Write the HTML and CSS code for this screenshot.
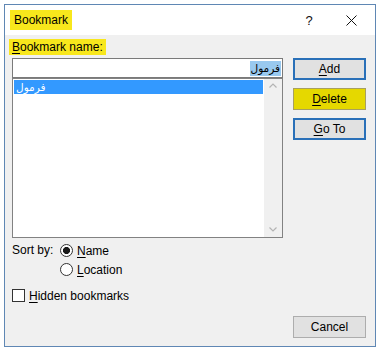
FILE: index.html
```html
<!DOCTYPE html>
<html>
<head>
<meta charset="utf-8">
<link rel="stylesheet" href="styles.css">
</head>
<body>
<div class="window">
  <div class="titlebar">
    <span class="title hl">Bookmark</span>
    <span class="tb-btn help">?</span>
    <span class="tb-btn close"><svg width="11" height="11" viewBox="0 0 11 11"><path d="M0.5 0.5 L10.5 10.5 M10.5 0.5 L0.5 10.5" stroke="#111" stroke-width="1" fill="none"/></svg></span>
  </div>
  <div class="content">
    <div class="left">
      <div class="label"><span class="hl"><u>B</u>ookmark name:</span></div>
      <div class="input"><span class="sel">فرمول</span></div>
      <div class="list">
        <div class="items"><div class="item selected">فرمول</div></div>
        <div class="scrollbar">
          <svg width="8" height="5" viewBox="0 0 8 5"><path d="M0.5 4.5 L4 1 L7.5 4.5" stroke="#b4b4b4" stroke-width="1.2" fill="none"/></svg>
          <svg width="8" height="5" viewBox="0 0 8 5"><path d="M0.5 0.5 L4 4 L7.5 0.5" stroke="#b4b4b4" stroke-width="1.2" fill="none"/></svg>
        </div>
      </div>
      <div class="sort">
        <span class="sort-label">Sort by:</span>
        <div class="radios">
          <div class="radio"><span class="circle checked"></span><span><u>N</u>ame</span></div>
          <div class="radio"><span class="circle"></span><span><u>L</u>ocation</span></div>
        </div>
      </div>
      <div class="check"><span class="box"></span><span><u>H</u>idden bookmarks</span></div>
    </div>
    <div class="right">
      <div class="btn default"><span><u>A</u>dd</span></div>
      <div class="btn yellow"><span><u>D</u>elete</span></div>
      <div class="btn default"><span><u>G</u>o To</span></div>
      <div class="btn cancel">Cancel</div>
    </div>
  </div>
</div>
</body>
</html>
```
FILE: styles.css
```css
body {
  margin: 0;
  background: #fff;
  font-family: "Liberation Sans", Arial, sans-serif;
  font-size: 12px;
  color: #000;
}
u { text-decoration: underline; text-underline-offset: 2px; }
.window {
  margin: 4px 0 0 4px;
  width: 372px;
  height: 343px;
  box-sizing: border-box;
  border: 1px solid #5f87b4;
  display: flex;
  flex-direction: column;
  background: #f0f0f0;
}
.titlebar {
  height: 30px;
  background: #fff;
  display: flex;
  align-items: center;
  padding-left: 5px;
  padding-right: 3px;
}
.hl { background: #f8e71c; }
.title {
  padding: 0 4px;
  line-height: 20px;
}
.tb-btn {
  width: 42px;
  height: 30px;
  display: flex;
  align-items: center;
  justify-content: center;
}
.help { margin-left: auto; font-size: 13px; color: #111; }
.content {
  flex: 1;
  display: flex;
  gap: 10px;
  padding: 4px 8px 8px 7px;
}
.left {
  width: 271px;
  display: flex;
  flex-direction: column;
}
.label { line-height: 16px; height: 16px; }
.label .hl {
  display: inline-block;
  margin-left: -3px;
  padding: 0 3px;
}
.input {
  margin-top: 3px;
  height: 20px;
  box-sizing: border-box;
  border: 1px solid #7a7a7a;
  background: #fff;
  display: flex;
  justify-content: flex-end;
  align-items: center;
  padding-right: 1px;
}
.sel {
  background: #99c9ef;
  font-family: "DejaVu Sans", sans-serif;
  font-size: 10.5px;
  line-height: 15px;
  padding: 0 1px;
}
.list {
  height: 160px;
  box-sizing: border-box;
  border: 1px solid #828282;
  background: #fff;
  display: flex;
}
.items { flex: 1; padding: 1px; }
.item {
  height: 14px;
  line-height: 14px;
  font-family: "DejaVu Sans", sans-serif;
  font-size: 10.5px;
  padding-left: 2px;
  direction: ltr;
  text-align: left;
}
.selected { background: #3399ff; color: #fff; }
.scrollbar {
  width: 18px;
  background: #f0f0f0;
  display: flex;
  flex-direction: column;
  justify-content: space-between;
  align-items: center;
  padding: 4px 0 5px;
}
.sort {
  margin-top: 3px;
  display: grid;
  grid-template-columns: 48px auto;
}
.sort-label { line-height: 19px; }
.radio, .check {
  display: flex;
  align-items: center;
  gap: 4px;
  height: 19px;
}
.circle {
  width: 13px;
  height: 13px;
  box-sizing: border-box;
  border: 1px solid #333;
  border-radius: 50%;
  background: #fff;
}
.circle.checked {
  background: radial-gradient(circle, #1a1a1a 0 3.3px, #fff 3.8px);
}
.check { margin-top: 7px; }
.box {
  width: 13px;
  height: 13px;
  box-sizing: border-box;
  border: 1px solid #333;
  background: #fff;
}
.right {
  width: 73px;
  display: flex;
  flex-direction: column;
  gap: 8px;
  padding-top: 19px;
}
.btn {
  height: 22px;
  box-sizing: border-box;
  display: flex;
  align-items: center;
  justify-content: center;
  background: #e1e1e1;
  border: 1px solid #adadad;
}
.btn.default { border: 2px solid #2a70b8; }
.btn.yellow { background: #e5d800; border: 1px solid #a8a060; }
.btn.cancel { margin-top: auto; }
```
